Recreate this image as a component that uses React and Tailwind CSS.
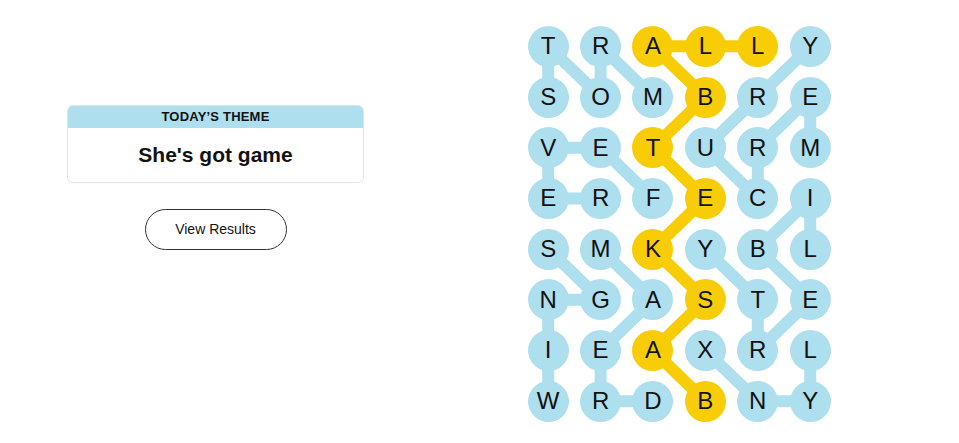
import React from "react";

const BLUE = "#aedfee";
const YELLOW = "#f8cd05";

const rows = [
  "TRALLY",
  "SOMBRE",
  "VETURM",
  "ERFECI",
  "SMKYBL",
  "NGASTE",
  "IEAXRL",
  "WRDBNY",
];

// words found on the board, as paths of [row, col]
const words = [
  { path: [[1, 0], [0, 0], [1, 1], [0, 1], [1, 2]], spangram: false }, // STORM
  { path: [[3, 2], [2, 1], [2, 0], [3, 0], [3, 1]], spangram: false }, // FEVER
  { path: [[2, 5], [1, 5], [2, 4], [3, 4], [2, 3], [1, 4], [0, 5]], spangram: false }, // MERCURY
  { path: [[4, 5], [3, 5], [4, 4], [5, 5], [6, 4], [5, 4], [4, 3]], spangram: false }, // LIBERTY
  { path: [[6, 5], [7, 5], [7, 4], [6, 3]], spangram: false }, // LYNX
  { path: [[7, 0], [6, 0], [5, 0], [5, 1], [4, 0]], spangram: false }, // WINGS
  { path: [[7, 2], [7, 1], [6, 1], [5, 2], [4, 1]], spangram: false }, // DREAM
  {
    path: [[7, 3], [6, 2], [5, 3], [4, 2], [3, 3], [2, 2], [1, 3], [0, 2], [0, 3], [0, 4]],
    spangram: true,
  }, // BASKETBALL
];

const CW = 52.4;
const CH = 50.7;

const yellowCells = new Set(
  words.filter((w) => w.spangram).flatMap((w) => w.path.map(([r, c]) => `${r}-${c}`))
);

const Board = () => {
  return (
    <div className="relative w-[314.4px] h-[405.6px]">
      <svg className="absolute inset-0" width="314.4" height="405.6">
        {words.map((w, i) => (
          <polyline
            key={i}
            points={w.path.map(([r, c]) => `${c * CW + CW / 2},${r * CH + CH / 2}`).join(" ")}
            fill="none"
            stroke={w.spangram ? YELLOW : BLUE}
            strokeWidth="12"
            strokeLinejoin="round"
          />
        ))}
      </svg>
      <div className="relative grid grid-cols-[repeat(6,52.4px)] grid-rows-[repeat(8,50.7px)]">
        {rows.map((row, r) =>
          row.split("").map((ch, c) => (
            <div key={`${r}-${c}`} className="flex items-center justify-center">
              <div
                className={`flex h-[41px] w-[41px] items-center justify-center rounded-full text-[24px] leading-none text-[#121212] ${
                  yellowCells.has(`${r}-${c}`) ? "bg-[#f8cd05]" : "bg-[#aedfee]"
                }`}
              >
                {ch}
              </div>
            </div>
          ))
        )}
      </div>
    </div>
  );
};

export default function App() {
  return (
    <div className="flex h-[443px] w-[959px] items-start bg-white font-['Liberation_Sans',Arial,sans-serif] text-[#121212]">
      {/* theme card + results */}
      <div className="ml-[67px] mt-[105px] flex w-[297px] flex-col items-center">
        <div className="w-full overflow-hidden rounded-[6px] border border-[#e3e3e3]">
          <div className="flex h-[22px] items-center justify-center bg-[#aedfee] text-[13px] font-bold uppercase tracking-[0.2px]">
            Today’s Theme
          </div>
          <div className="flex h-[54px] items-center justify-center bg-white text-[21px] font-bold">
            She's got game
          </div>
        </div>
        <button className="mt-[26px] flex h-[41px] w-[142px] items-center justify-center rounded-full border border-[#333] bg-white text-[14px]">
          View Results
        </button>
      </div>

      {/* board */}
      <div className="ml-[158px] mt-[21px]">
        <Board />
      </div>
    </div>
  );
}
